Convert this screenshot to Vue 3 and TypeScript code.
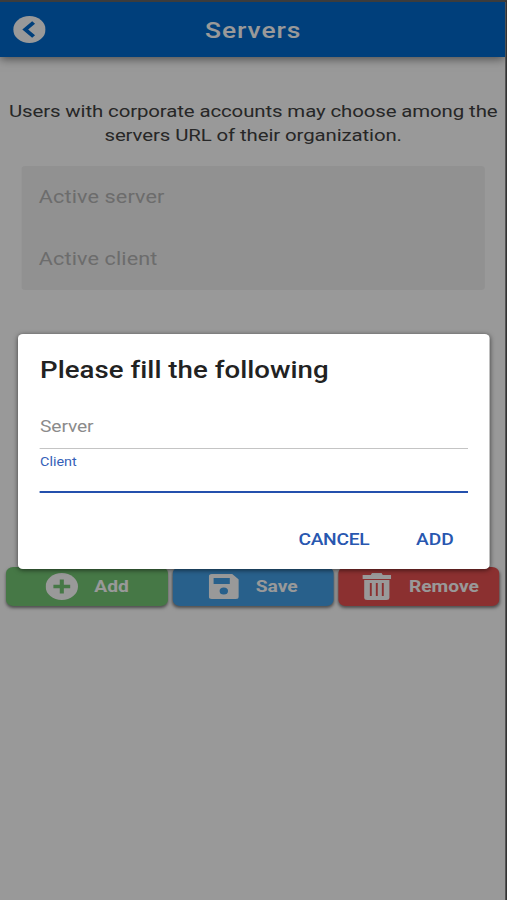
<script setup lang="ts">
import { ref } from 'vue'

const activeFields: string[] = ['Active server', 'Active client']
const actions = [
  { name: 'add', label: 'Add' },
  { name: 'save', label: 'Save' },
  { name: 'remove', label: 'Remove' },
]
const focused = ref('client')
</script>

<template>
  <div class="screen">
    <header class="bar">
      <svg class="back" viewBox="0 0 27 27">
        <circle cx="13.5" cy="13.5" r="13.5" fill="#fff" />
        <path d="M17 6.5 10 13.5l7 7" fill="none" stroke="#0069cd" stroke-width="3.4" />
      </svg>
      <h1>Servers</h1>
    </header>

    <main class="content">
      <p class="intro">
        <span class="line">Users with corporate accounts may choose among the</span>
        <span class="line">servers URL of their organization.</span>
      </p>

      <section class="panel">
        <div v-for="field in activeFields" :key="field" class="row"><span>{{ field }}</span></div>
      </section>

      <div class="actions">
        <button v-for="a in actions" :key="a.name" :class="['action', a.name]">
          <svg v-if="a.name === 'add'" class="icon" viewBox="0 0 27 27">
            <circle cx="13.5" cy="13.5" r="13.5" fill="#fff" />
            <path d="M13.5 6.5v14M6.5 13.5h14" stroke="#75c875" stroke-width="3.4" />
          </svg>
          <svg v-else-if="a.name === 'save'" class="icon" viewBox="0 0 25 25">
            <path
              fill="#fff"
              fill-rule="evenodd"
              d="M2.5 0h17L25 5.5v17a2.5 2.5 0 0 1-2.5 2.5h-20A2.5 2.5 0 0 1 0 22.5v-20A2.5 2.5 0 0 1 2.5 0ZM4 4v6h13.5V4ZM12.5 13.5a3.5 3.5 0 1 0 0 7a3.5 3.5 0 0 0 0-7Z"
            />
          </svg>
          <svg v-else class="icon" viewBox="0 0 24 27">
            <path d="M0 2h7l1-2h8l1 2h7v4H0Z" fill="#fff" />
            <path d="M1.5 7h21v17.5a2.5 2.5 0 0 1-2.5 2.5H4a2.5 2.5 0 0 1-2.5-2.5Z" fill="#fff" />
            <path d="M7 10v13M12 10v13M17 10v13" stroke="#e85050" stroke-width="1.6" />
          </svg>
          <span>{{ a.label }}</span>
        </button>
      </div>
    </main>

    <div class="backdrop">
      <div class="dialog" role="dialog">
        <h2>Please fill the following</h2>
        <div class="field server"><label>Server</label></div>
        <div :class="['field', 'client', { focused: focused === 'client' }]"><label>Client</label></div>
        <div class="buttons">
          <button class="cancel">CANCEL</button>
          <button class="confirm">ADD</button>
        </div>
      </div>
    </div>
  </div>
</template>

<style>
body {
  overflow: hidden;
  background: #999;
}
</style>

<style scoped>
/* The mobile viewport is drawn 1.2 times wider than it is laid out. */
.screen {
  position: relative;
  box-sizing: border-box;
  width: 423px;
  height: 900px;
  overflow: hidden;
  transform: scaleX(1.2);
  transform-origin: 0 0;
  background: #fff;
  border-top: 2px solid #3c3c3c;
  border-right: 2px solid #333;
  font-family: Roboto, 'Liberation Sans', sans-serif;
  color: #424242;
}
button {
  border: 0;
  padding: 0;
  background: none;
  font: inherit;
}
.bar {
  display: grid;
  grid-template-columns: 60px 1fr 60px;
  align-items: center;
  height: 55px;
  background: #0069cd;
  box-shadow: 0 2px 8px rgba(0, 0, 0, 0.5);
}
.back {
  width: 27px;
  height: 27px;
  margin-left: 10.6px;
}
h1 {
  margin: 2px 0 0;
  padding-left: 1px;
  text-align: center;
  color: #fff;
  font-size: 22px;
  font-weight: 500;
  line-height: 28px;
  letter-spacing: 0.8px;
}
.content {
  display: flex;
  flex-direction: column;
}
.intro {
  margin: 42px 0 0;
  padding-left: 1px;
  text-align: center;
  font-size: 17px;
  line-height: 24px;
  letter-spacing: -0.09px;
}
.line {
  display: block;
  white-space: nowrap;
}
.panel {
  height: 124px;
  margin: 19px 17.3px 0 18.4px;
  border-radius: 3px;
  background: #f2f2f2;
}
.row {
  display: flex;
  align-items: center;
  height: 62px;
  margin-top: -1px;
  margin-bottom: 1px;
  padding-left: 14px;
  color: #b5b5b5;
  font-size: 18px;
  letter-spacing: 0.1px;
}
.actions {
  display: grid;
  grid-template-columns: repeat(3, 134.3px);
  gap: 3.9px;
  margin: 277px 0 0 5.4px;
}
.action {
  display: flex;
  align-items: center;
  justify-content: center;
  gap: 13.8px;
  height: 39px;
  border-radius: 6px;
  box-shadow: 0 2px 3px rgba(0, 0, 0, 0.5);
  color: #fff;
  font-size: 16px;
  font-weight: 700;
}
.action span {
  margin-top: -1px;
}
.add { background: #75c875; }
.save { background: #43a0e8; }
.remove { background: #e85050; }
.icon { width: 27px; height: 27px; }
.save .icon { width: 25px; height: 25px; }
.remove .icon { width: 24px; }
.save { padding-left: 1px; }
.remove { gap: 15px; padding-left: 3px; }
.backdrop {
  position: absolute;
  inset: -2px -2px 0 0;
  background: rgba(0, 0, 0, 0.4);
}
.dialog {
  display: flex;
  flex-direction: column;
  box-sizing: border-box;
  width: 392.5px;
  height: 235px;
  margin: 334px 0 0 15.4px;
  padding: 21px 18px 0;
  border-radius: 4px;
  background: #fff;
  box-shadow: 0 1px 5px rgba(0, 0, 0, 0.6);
}
h2 {
  margin: 0;
  color: #222;
  font-size: 23px;
  font-weight: 500;
  line-height: 32px;
  letter-spacing: 0.03px;
  font-variant-ligatures: none;
}
.field {
  box-sizing: border-box;
  border-bottom: 1px solid #c4c4c4;
}
.server {
  height: 62px;
  padding-top: 30px;
  color: #8b8b8b;
  font-size: 16px;
  line-height: 20px;
  letter-spacing: -0.1px;
}
.client {
  height: 44px;
  padding-top: 5px;
  font-size: 12px;
  line-height: 16px;
}
.focused {
  border-bottom: 2px solid #2450ad;
  color: #3560b8;
}
.buttons {
  display: flex;
  justify-content: flex-end;
  gap: 39px;
  padding: 36px 11.7px 0 0;
}
.buttons button {
  color: #2857b0;
  font-size: 16px;
  font-weight: 500;
  line-height: 22px;
}
.buttons .cancel {
  letter-spacing: -0.25px;
}
</style>
